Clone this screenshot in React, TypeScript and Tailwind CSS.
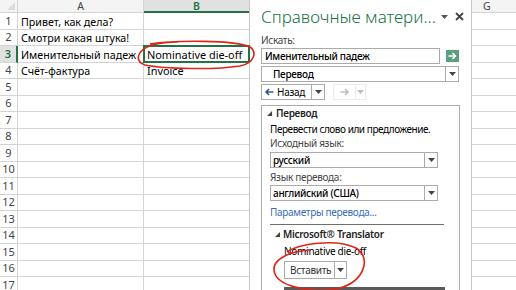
import React from "react";

const F = '"Noto Sans", "Open Sans", sans-serif';

const cellA: Record<number, string> = {
  1: "Привет, как дела?",
  2: "Смотри какая штука!",
  3: "Именительный падеж",
  4: "Счёт-фактура",
};
const cellB: Record<number, string> = { 3: "Nominative die-off", 4: "Invoice" };

function DownTri({ color = "#444" }: { color?: string }) {
  return (
    <svg width="7" height="4" viewBox="0 0 7 4">
      <polygon points="0,0 7,0 3.5,4" fill={color} />
    </svg>
  );
}

function Expander() {
  return (
    <svg width="5" height="5" viewBox="0 0 5 5">
      <polygon points="5,0 5,5 0,5" fill="#444" />
    </svg>
  );
}

function Select({ text }: { text: string }) {
  return (
    <div className="flex h-[16px] w-[168px] border border-[#ababab] bg-white">
      <div className="flex-1 flex items-center pl-[2px] text-[10px] tracking-[-0.3px] font-medium text-black">
        {text}
      </div>
      <div className="w-[13px] border-l border-[#ababab] flex items-center justify-center">
        <DownTri />
      </div>
    </div>
  );
}

export default function App() {
  const rows = Array.from({ length: 17 }, (_, i) => i + 1);
  return (
    <div
      className="relative w-[516px] h-[290px] overflow-hidden bg-white flex"
      style={{ fontFamily: F }}
    >
      {/* Sheet left */}
      <div className="w-[250px] shrink-0 grid grid-cols-[18px_126px_105px] grid-rows-[13px_repeat(17,16.5px)] border-r border-[#c8c8c8]">
        <div className="border-r border-b border-[#d4d4d4] bg-[#f4f4f4] relative">
          <svg className="absolute right-[2px] bottom-[2px]" width="8" height="8" viewBox="0 0 8 8">
            <polygon points="8,0 8,8 0,8" fill="#dcdcdc" />
          </svg>
        </div>
        <div className="border-r border-b border-[#d4d4d4] bg-[#f4f4f4] flex items-center justify-center text-[10.5px] leading-[12px] text-[#444]">
          A
        </div>
        <div className="border-b-2 border-[#217346] bg-[#e1e1e1] flex items-center justify-center text-[10.5px] leading-[12px] font-semibold text-[#217346]">
          B
        </div>
        {rows.map((r) => (
          <React.Fragment key={r}>
            <div
              className={`border-b flex items-center justify-center text-[11px] leading-[14px] ${
                r === 3
                  ? "border-r-2 border-r-[#217346] border-b-[#d4d4d4] bg-[#e1e1e1] text-[#217346] font-semibold"
                  : "border-r border-[#d4d4d4] text-[#444]"
              }`}
            >
              {r}
            </div>
            <div className="border-r border-b border-[#d4d4d4] flex items-center pl-[3px] pt-[2px] text-[10.7px] leading-[14px] text-black whitespace-nowrap overflow-hidden">
              {cellA[r] ?? ""}
            </div>
            <div className="relative border-b border-[#d4d4d4] flex items-center pl-[3px] pt-[2px] text-[10.9px] leading-[14px] text-black whitespace-nowrap">
              {cellB[r] ?? ""}
              {r === 3 && (
                <div className="absolute left-[-1px] top-[-1px] right-[-1px] bottom-[-1px] border-2 border-[#217346]" />
              )}
            </div>
          </React.Fragment>
        ))}
      </div>

      {/* Task pane */}
      <div className="w-[221px] shrink-0 bg-white flex flex-col pl-[11px] text-[10px] tracking-[-0.3px]">
        <div className="flex items-center h-[33px] shrink-0">
          <div className="text-[17px] tracking-normal font-light text-[#217346] whitespace-nowrap w-[178px] leading-none">
            Справочные матери...
          </div>
          <div className="ml-[2px] mt-[1px]">
            <DownTri color="#555" />
          </div>
          <svg className="ml-[7px]" width="9" height="9" viewBox="0 0 9 9">
            <path d="M1 1 L8 8 M8 1 L1 8" stroke="#444" strokeWidth="1.8" />
          </svg>
        </div>
        <div className="text-[#444] leading-[14px]">Искать:</div>
        <div className="flex items-center mt-[1px]">
          <div className="w-[179px] h-[16px] border border-[#ababab] flex items-center pl-[3px] font-medium text-black">
            Именительный падеж
          </div>
          <div className="ml-[6px] w-[13px] h-[12px] bg-[#5c9e80] flex items-center justify-center">
            <svg width="9" height="8" viewBox="0 0 9 8">
              <path d="M0.5 4 H7.5 M4.5 1 L7.5 4 L4.5 7" stroke="white" strokeWidth="1.6" fill="none" />
            </svg>
          </div>
        </div>
        <div className="flex mt-[2px] h-[16px] w-[198px] border border-[#ababab] shrink-0">
          <div className="flex-1 flex items-center pl-[11px] font-medium text-black">Перевод</div>
          <div className="w-[13px] border-l border-[#ababab] flex items-center justify-center">
            <DownTri />
          </div>
        </div>
        <div className="flex items-center mt-[2px] h-[16px] shrink-0">
          <div className="flex h-[16px] border border-[#ababab]">
            <div className="w-[49px] flex items-center pl-[2px] gap-[3px] text-black">
              <svg width="10" height="8" viewBox="0 0 10 8">
                <path d="M9.5 4 H2 M5 1 L2 4 L5 7" stroke="#2b5797" strokeWidth="1.6" fill="none" />
              </svg>
              Назад
            </div>
            <div className="w-[13px] border-l border-[#ababab] flex items-center justify-center">
              <DownTri />
            </div>
          </div>
          <div className="flex h-[16px] ml-[8px] border border-[#ececec]">
            <div className="w-[21px] flex items-center justify-center">
              <svg width="10" height="8" viewBox="0 0 10 8">
                <path d="M0.5 4 H8 M5 1 L8 4 L5 7" stroke="#bdbdbd" strokeWidth="1.6" fill="none" />
              </svg>
            </div>
            <div className="w-[10px] border-l border-[#ececec] flex items-center justify-center">
              <DownTri color="#bdbdbd" />
            </div>
          </div>
        </div>

        {/* Scrollable content box */}
        <div className="mt-[5px] w-[199px] flex-1 border-l border-t border-r border-[#ababab] flex flex-col">
          <div className="flex items-center h-[14px] pl-[5px] gap-[4px] font-semibold text-[#222]">
            <Expander />
            Перевод
          </div>
          <div className="pl-[8px] flex flex-col">
            <div className="text-black leading-[14px] mt-[2px] whitespace-nowrap tracking-[-0.45px]">
              Перевести слово или предложение.
            </div>
            <div className="text-[#444] leading-[14px]">Исходный язык:</div>
            <div className="mt-[2px]">
              <Select text="русский" />
            </div>
            <div className="text-[#444] leading-[14px] mt-[2px]">Язык перевода:</div>
            <div className="mt-[1px]">
              <Select text="английский (США)" />
            </div>
            <div className="text-[#3b6fb6] leading-[14px] mt-[4px]">Параметры перевода...</div>
            <div className="mt-[5px] w-[174px] h-[1px] bg-[#6f6f6f]" />
            <div className="flex items-center h-[14px] mt-[2px] ml-[5px] gap-[3px] font-semibold text-[#222]">
              <Expander />
              Microsoft® Translator
            </div>
            <div className="pl-[14px] flex flex-col">
              <div className="text-black leading-[14px] mt-[3px]">Nominative die-off</div>
              <div className="flex mt-[3px] h-[18px] w-[63px] border border-[#ababab]">
                <div className="flex-1 flex items-center pl-[5px] text-[#333]">Вставить</div>
                <div className="w-[12px] border-l border-[#ababab] flex items-center justify-center">
                  <DownTri />
                </div>
              </div>
              <div className="mt-[8px] w-[161px] h-[4px] bg-[#5a5a5a]" />
            </div>
          </div>
        </div>
      </div>

      {/* Column G area */}
      <div className="flex-1 border-l border-[#c8c8c8] grid grid-rows-[13px_repeat(17,16.5px)]">
        <div className="border-b border-[#d4d4d4] bg-[#f4f4f4] flex items-center pl-[11px] text-[10.5px] leading-[12px] text-[#444]">
          G
        </div>
        {rows.map((r) => (
          <div key={r} className="border-b border-[#d4d4d4]" />
        ))}
      </div>

      {/* Hand-drawn red ellipses */}
      <svg className="absolute left-0 top-0 pointer-events-none" width="516" height="290" viewBox="0 0 516 290">
        <path
          d="M150 44 C 175 40, 235 40, 250 47 C 257 52, 255 63, 240 66 C 215 70, 165 69, 145 65 C 134 61, 137 50, 152 45 C 160 43, 170 42, 178 42"
          stroke="#e02418"
          strokeWidth="1.6"
          fill="none"
        />
        <path
          d="M287 252 C 298 244, 335 238, 356 248 C 372 258, 364 281, 340 288 C 315 293, 281 288, 275 274 C 270 262, 284 252, 310 250"
          stroke="#e02418"
          strokeWidth="1.6"
          fill="none"
        />
      </svg>
    </div>
  );
}
